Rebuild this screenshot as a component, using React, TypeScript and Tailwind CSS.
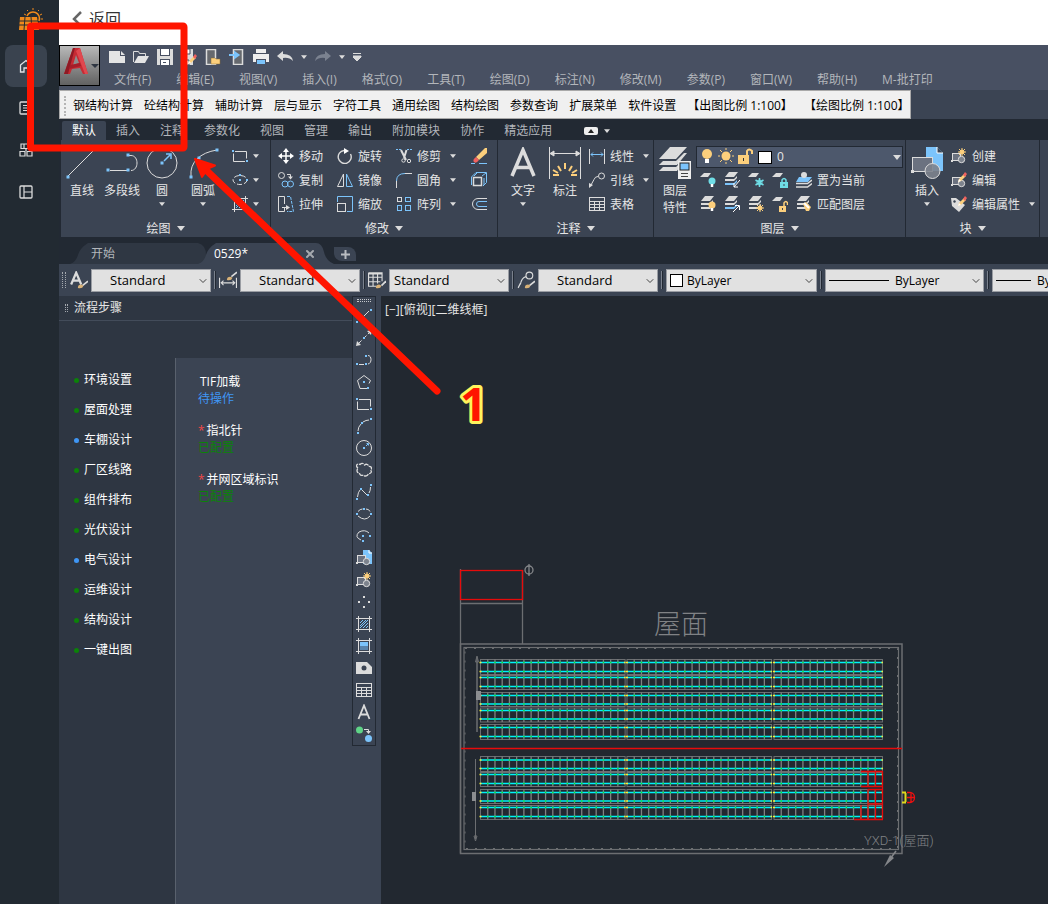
import type { ReactNode } from 'react';
import { ChevronDown, X } from 'lucide-react';

const W = '#dcdcdc';
const B = '#7cc4fb';
const Y = '#fccf7c';
const T = '#6fdde6';

interface IconProps {
  children: ReactNode;
  size?: number;
  box?: number;
}

function Icon({ children, size = 16, box = 16 }: IconProps) {
  return (
    <svg
      width={size}
      height={size}
      viewBox={`0 0 ${box} ${box}`}
      fill="none"
      stroke={W}
      className="shrink-0"
      aria-hidden="true"
    >
      {children}
    </svg>
  );
}

// Small blue grip square centred on a point
const Dot = ({ x, y, s = 2 }: { x: number; y: number; s?: number }) => (
  <rect x={x - s / 2} y={y - s / 2} width={s} height={s} fill={B} stroke="none" />
);

const Caret = ({ wide = false }: { wide?: boolean }) => (
  <svg
    width={wide ? 8 : 6}
    height={wide ? 5 : 4}
    viewBox="0 0 8 5"
    className="shrink-0"
    aria-hidden="true"
  >
    <path d="M0 0h8L4 5z" fill={W} />
  </svg>
);

const Pencil = () => (
  <g stroke="none">
    <path d="M7 10l1-3 5-5 2 2-5 5z" fill={Y} />
    <path d="M12 3l2-3 2 2-2 3z" fill="#f0625f" />
    <path d="M7 10l1-3 2 2z" fill="#fff" />
  </g>
);

const Star = ({ x, y }: { x: number; y: number }) => (
  <g stroke={Y}>
    <path d={`M${x - 4} ${y}h8M${x} ${y - 4}v8M${x - 3} ${y - 3}l6 6M${x + 3} ${y - 3}l-6 6`} />
    <circle cx={x} cy={y} r="2" fill={Y} />
  </g>
);

const BlockShape = () => (
  <>
    <rect x="1.500" y="5.500" width="8" height="7" fill="#6b7280" />
    <rect x="0" y="12" width="2" height="2" fill={W} stroke="none" />
    <circle cx="10.500" cy="11.500" r="3.200" fill="#7d838d" />
  </>
);

const layerSheets = 'M4 1h7l-3 4H0z';

const Sheets = ({ tint = W }: { tint?: string }) => (
  <g stroke="none" fill={W}>
    <path d="M5 0h9l-4 5H1z" />
    <path d="M1 7h9l3-3v2l-3 3H1z" />
    <path d="M1 11h9l3-3v2l-3 3H1z" fill={tint} />
  </g>
);

const icons = {
  line: (
    <>
      <path d="M3 13L13 3" />
      <Dot x={1} y={14} />
      <Dot x={15} y={2} />
    </>
  ),
  xline: (
    <>
      <path d="M2 14L14 2" strokeDasharray="5 2" />
      <path d="M0 16l1-5 4 4zM16 0l-1 5-4-4z" fill={W} stroke="none" />
      <Dot x={8} y={8} />
    </>
  ),
  pline: (
    <>
      <path d="M3 12.500h5M12 3.500c4 0 4 8 0 8.500" />
      <Dot x={1} y={12} />
      <Dot x={10} y={12} />
      <Dot x={10} y={4} />
    </>
  ),
  polygon: (
    <>
      <path d="M8 1.500l6.500 5-1.500 3M11 14.500H4l-2.500-8L8 1.500" />
      <Dot x={8} y={8} />
      <Dot x={12} y={14} />
    </>
  ),
  rect: (
    <>
      <path d="M3 3.500h11.500v7M13 13.500H1.500v-8" />
      <Dot x={1} y={3} />
      <Dot x={15} y={13} />
    </>
  ),
  arc: (
    <>
      <path d="M2 13Q2 9 5 6M7 4Q10 2 13 2" />
      <Dot x={2} y={15} />
      <Dot x={6} y={5} />
      <Dot x={15} y={1} />
    </>
  ),
  circle: (
    <>
      <circle cx="8" cy="8" r="7.500" />
      <path d="M10 6l2-2M10.500 3.500h2v2" stroke={B} />
      <Dot x={8} y={8} />
    </>
  ),
  cloud: (
    <path
      d="M2 6C-1 4 1 1 4 2.500c2-2 4-1 4.500.5 2-1.500 4-.5 4 1.500 3-.5 4 2 2 3.500 2 2 0 4-2 3.500-1 3-4 3-5 1.500-2 1-4 0-4-2-3 0-3-3-1.500-5z"
      strokeDasharray="5 1"
      strokeWidth="1.300"
    />
  ),
  spline: (
    <>
      <path d="M1.500 13Q2 8 4 6M6 6l5 5M13 9q1.500-2 1.500-6" />
      <Dot x={1} y={15} />
      <Dot x={5} y={5} />
      <Dot x={12} y={11} />
      <Dot x={15} y={1} />
    </>
  ),
  ellipse: (
    <>
      <path d="M2 5.500q2-2.500 4.500-2.500M10 3q3 0 4 2.500M14 10q-5 6-12 0" />
      <Dot x={8} y={3} />
      <Dot x={1} y={8} />
      <Dot x={15} y={8} />
    </>
  ),
  ellipseCentre: (
    <>
      <ellipse cx="8" cy="8" rx="7" ry="4.500" strokeDasharray="5 2" />
      <Dot x={8} y={8} />
      <Dot x={8} y={3} />
      <Dot x={15} y={8} />
    </>
  ),
  ellipseArc: (
    <>
      <path d="M13 5Q9 1 3 4q-5 5 2 8" />
      <Dot x={7} y={8} />
      <Dot x={14} y={8} />
      <Dot x={7} y={13} />
    </>
  ),
  insert: (
    <>
      <path d="M7 0h6l3 3v11H7z" fill={B} stroke="none" />
      <path d="M13 0v3h3" stroke="#fff" />
      <BlockShape />
    </>
  ),
  create: (
    <>
      <BlockShape />
      <Star x={11} y={4} />
    </>
  ),
  editBlock: (
    <>
      <BlockShape />
      <Pencil />
    </>
  ),
  editAttr: (
    <>
      <path d="M0 2h5l9 7-6 7L1 10z" fill={W} stroke="none" />
      <circle cx="3.500" cy="5.500" r="1.200" fill="#3b4453" stroke="none" />
      <Pencil />
    </>
  ),
  points: (
    <g fill={W} stroke="none">
      <rect x="7" y="2" width="2" height="2" />
      <rect x="2" y="7" width="2" height="2" />
      <rect x="12" y="7" width="2" height="2" />
      <rect x="7" y="12" width="2" height="2" />
    </g>
  ),
  hatch: (
    <>
      <path d="M0 2.500h16M0 13.500h16M2.500 0v16M13.500 0v16" />
      <path d="M4 7l3-3M4 10l6-6M4 12l8-8M7 12l5-5M10 12l2-2" stroke={B} />
    </>
  ),
  gradient: (
    <>
      <path d="M0 2.500h16M0 13.500h16M2.500 0v16M13.500 0v16" />
      <rect x="4" y="4" width="8" height="4" fill={B} stroke="none" />
      <rect x="4" y="8" width="8" height="4" fill="#5a84ab" stroke="none" />
    </>
  ),
  region: (
    <>
      <path d="M0 2h11l5 5v7H0z" fill={W} stroke="none" />
      <circle cx="8" cy="8" r="2.500" fill="#3b4453" stroke="none" />
    </>
  ),
  table: (
    <>
      <rect x="0.500" y="1.500" width="15" height="13" />
      <path d="M0 5.500h16M0 8.500h16M0 11.500h16M5.500 5v9M10.500 5v9" />
    </>
  ),
  mtext: <path d="M2.500 15L8 1.500 13.500 15M4.500 10.500h7" strokeWidth="1.800" />,
  addSelected: (
    <>
      <circle cx="3.500" cy="4" r="3.500" fill="#5fd487" stroke="none" />
      <circle cx="12.500" cy="12.500" r="3.500" fill={B} stroke="none" />
      <path d="M8 3.500h4.500V6" />
      <path d="M10 5h5l-2.500 3z" fill={W} stroke="none" />
    </>
  ),
  move: (
    <>
      <path d="M8 2v12M2 8h12" strokeWidth="1.500" stroke="#fff" />
      <path d="M8 0l3 4H5zM8 16l3-4H5zM0 8l4-3v6zM16 8l-4-3v6z" fill="#fff" stroke="none" />
    </>
  ),
  rotate: (
    <>
      <path d="M7 2.500a6.500 6.500 0 1 0 6.500 3.500" strokeWidth="1.400" />
      <path d="M7 0l5 3-5 3z" fill="#fff" stroke="none" />
    </>
  ),
  trim: (
    <>
      <path d="M0 1.500h5M11 1.500h5" stroke={B} strokeDasharray="2 1" />
      <path d="M5 2l5 10M10.500 2L8 10" strokeWidth="2" />
      <circle cx="7.500" cy="12.500" r="1.700" />
      <circle cx="13" cy="13" r="1.700" />
    </>
  ),
  copy: (
    <>
      <circle cx="3.500" cy="3.500" r="3" />
      <path d="M9 2.500h3.500V5" />
      <path d="M10 4.500h5l-2.500 3z" fill={W} stroke="none" />
      <circle cx="7" cy="12" r="3" stroke={B} />
      <circle cx="12.500" cy="12" r="3" stroke={B} />
    </>
  ),
  mirror: (
    <>
      <path d="M6.500 2v12.500h-6z" />
      <path d="M9.500 2v12.500h6z" stroke={B} />
    </>
  ),
  fillet: (
    <>
      <path d="M.5 16V9M9 1.500h7" />
      <path d="M.5 9q0-7.500 8.500-7.500" stroke={B} />
    </>
  ),
  stretch: (
    <>
      <path d="M6.500 11v4.500h-6V.5h6V8" />
      <path d="M9 .5h3.500l3 15H9" stroke={B} strokeDasharray="3 1" />
      <path d="M4 11.500h5" />
      <path d="M8 9l4 2.500L8 14z" fill={W} stroke="none" />
    </>
  ),
  scale: (
    <>
      <path d="M.5 6V.5h15v15H10" stroke={B} />
      <rect x="0.500" y="7.500" width="8" height="8" />
    </>
  ),
  array: (
    <>
      <rect x="1.500" y="1.500" width="4" height="4" />
      <rect x="9.500" y="1.500" width="5" height="4" stroke={B} />
      <rect x="1.500" y="9.500" width="4" height="5" stroke={B} />
      <rect x="9.500" y="9.500" width="5" height="5" stroke={B} />
    </>
  ),
  erase: (
    <>
      <path d="M14 0h2v5l-8 7-3-3z" fill={Y} stroke="none" />
      <path d="M5 9l3 3q-3 4-5 2t2-5" fill="#f0625f" stroke="none" />
      <path d="M0 15.500h4M8 15.500h8" stroke={B} />
    </>
  ),
  explode: (
    <>
      <rect x="2.500" y="5.500" width="8" height="8" strokeWidth="1.500" />
      <path d="M.5 13V5L5 .5h10.500v10L12 14M3 4l3-3M11 4l4-3M13 6v7" stroke={B} />
    </>
  ),
  offset: (
    <>
      <path d="M16 2.500H7a5.500 5.500 0 0 0 0 11h9" />
      <path d="M16 5.500H8a2.500 2.500 0 0 0 0 5h8" stroke={B} />
    </>
  ),
  linear: (
    <>
      <path d="M.5 1v15M15.500 1v15" />
      <path d="M2 6.500h12M4 4.500l-2 2 2 2M12 4.500l2 2-2 2" stroke={B} />
    </>
  ),
  leader: (
    <>
      <circle cx="12.500" cy="4" r="3" />
      <path d="M9 4.500q-3 0-4 3L2 13" />
      <path d="M0 16v-5l4 2z" fill={W} stroke="none" />
    </>
  ),
  layOff: (
    <>
      <path d={layerSheets} fill={W} stroke="none" />
      <circle cx="12" cy="9" r="3.500" fill={T} stroke="none" />
      <path d="M12 12v3" stroke="#fff" strokeWidth="2.500" />
    </>
  ),
  layIso: (
    <>
      <Sheets tint={B} />
      <path d="M16 8l-6 7M10 11v4h4" stroke="#fff" />
    </>
  ),
  layFreeze: (
    <>
      <path d={layerSheets} fill={W} stroke="none" />
      <path d="M11.500 6v9M7.500 8l8 5M15.500 8l-8 5" stroke={T} strokeWidth="1.500" />
      <circle cx="11.500" cy="10.500" r="2.500" stroke={T} />
    </>
  ),
  layLock: (
    <>
      <path d={layerSheets} fill={W} stroke="none" />
      <rect x="8" y="10" width="8" height="6" fill={T} stroke="none" />
      <path d="M10 10V8q2-3 4 0v2" stroke={T} strokeWidth="1.500" />
      <path d="M12 12v2" stroke="#3b4453" />
    </>
  ),
  layOn: (
    <>
      <Sheets />
      <circle cx="12" cy="9" r="3.500" fill={Y} stroke="none" />
      <path d="M12 12v3" stroke="#fff" strokeWidth="2.500" />
    </>
  ),
  layUniso: (
    <>
      <Sheets tint={B} />
      <path d="M9 16l6-6M11 9.500h4.500V14" stroke="#fff" />
    </>
  ),
  layThaw: (
    <>
      <Sheets />
      <Star x={12} y={12} />
    </>
  ),
  layUnlock: (
    <>
      <path d={layerSheets} fill={W} stroke="none" />
      <rect x="7" y="10" width="7" height="6" fill={Y} stroke="none" />
      <path d="M12 10V7q2-3 3.500 0v2" stroke={Y} strokeWidth="1.500" />
      <path d="M10.500 12v2" stroke="#3b4453" />
    </>
  ),
  layCurrent: (
    <>
      <path d="M3 5h13l-4 5H0z" fill={B} stroke="none" />
      <circle cx="8" cy="3" r="3" fill={W} stroke="none" />
      <path d="M0 11.500h11.500L16 8M0 15h11.500L16 11.500" strokeWidth="1.500" />
    </>
  ),
  layMatch: (
    <>
      <Sheets />
      <path d="M7 8l3-2 5 5-2 4h-3z" fill={Y} stroke="none" />
      <path d="M8 7l5 5" stroke="#fff" strokeWidth="2" />
    </>
  ),
  fileNew: <path d="M0 2h11v5h5v7H0zM12 2l4 4h-4z" fill="#e4e4e4" stroke="none" />,
  fileOpen: (
    <>
      <path d="M.5 13V2.500h5l1 2h6V7" />
      <path d="M1 14L5 7h11l-4 7z" fill="#e4e4e4" stroke="none" />
    </>
  ),
  save: (
    <>
      <path d="M0 0h16v16H0z" fill={W} stroke="none" />
      <path d="M3 0h10v7H3zM3 10h10v6H3z" fill="#485062" stroke="none" />
      <path d="M4 0h8v6H4zM4 11h8v5H4z" fill="#fff" stroke="none" />
      <path d="M6 13.500h3" stroke="#485062" />
    </>
  ),
  saveAs: (
    <>
      <path d="M0 0h12v16H0z" fill={W} stroke="none" />
      <path d="M3 0h6v5H3zM3 11h5v5H3z" fill="#fff" stroke="#485062" />
      <g transform="translate(0 5)">
        <Pencil />
      </g>
    </>
  ),
  phoneOpen: (
    <>
      <rect x="1.500" y="0.500" width="9" height="15" fill="#66696e" strokeWidth="1.500" />
      <path d="M6 15V9h4l1 1h4v5z" fill={Y} stroke="#8b6a31" strokeWidth=".5" />
    </>
  ),
  phoneSave: (
    <>
      <rect x="4.500" y="0.500" width="9" height="15" fill="#66696e" strokeWidth="1.500" />
      <path d="M0 6h6M6 3.500l3.500 2.500L6 8.500z" stroke={B} strokeWidth="2" fill={B} />
    </>
  ),
  print: (
    <g stroke="none" fill="#eee">
      <path d="M3 0h10v4H3zM0 5h16v8H0z" />
      <path d="M3 10h10v6H3z" fill="#485062" />
      <path d="M4 11h8v4H4z" fill={B} />
    </g>
  ),
  undo: <path d="M0 7l6-5v3q9 0 10 7-4-4-10-3v3z" fill={W} stroke="none" />,
  redo: <path d="M16 7l-6-5v3Q1 5 0 12q4-4 10-3v3z" fill="#7b8290" stroke="none" />,
  custom: <path d="M0 4.500h8M0 7h8v1l-4 4-4-4z" fill={W} />,
  textStyle: (
    <>
      <path d="M1 12L5.500 1.500 10 12M3 8.500h5" strokeWidth="2" />
      <path d="M16 9l-5 4" strokeWidth="1.500" />
      <path d="M7 15q0-3 3-3l2 1q-1 3-5 2" fill="#d9b277" stroke="none" />
    </>
  ),
  dimStyle: (
    <>
      <path d="M.5 6v9M15.500 6v9M2 10.500h12M4 8.500l-2 2 2 2M12 8.500l2 2-2 2" />
      <path d="M16 1l-5 4" strokeWidth="1.500" />
      <path d="M7 8q0-3 3-3l2 1q-1 3-5 2" fill="#d9b277" stroke="none" />
    </>
  ),
  tableStyle: (
    <>
      <path d="M.5 1.500h12V9M.5 1.500v12h7M0 2.500h13M0 5.500h12M0 9.500h11M4.500 2v11M8.500 2v9" />
      <path d="M16 9l-4 4" strokeWidth="1.500" />
      <path d="M7 15q0-3 3-3l2 1q-1 3-5 2" fill="#d9b277" stroke="none" />
    </>
  ),
  leaderStyle: (
    <>
      <circle cx="11" cy="4" r="3" />
      <path d="M8 5q-4 1-5 7M1 15l2-4" />
      <path d="M16 9l-5 4" strokeWidth="1.500" />
      <path d="M7 15q0-3 3-3l2 1q-1 3-5 2" fill="#d9b277" stroke="none" />
    </>
  ),
};

type IconName = keyof typeof icons;

const bigIcons = {
  line: (
    <>
      <path d="M2 29L29 2" />
      <Dot x={2} y={30} s={3} />
      <Dot x={30} y={2} s={3} />
    </>
  ),
  pline: (
    <>
      <path d="M4 23.500h18M22 8.500h3c8 0 8 15 0 15" />
      <Dot x={2} y={23} s={3} />
      <Dot x={22} y={23} s={3} />
      <Dot x={22} y={8} s={3} />
    </>
  ),
  circle: (
    <>
      <circle cx="16" cy="16" r="15" />
      <path d="M18 14l6-6M20 7h5v5" stroke={B} strokeWidth="1.500" />
      <Dot x={16} y={16} s={3} />
    </>
  ),
  arc: (
    <>
      <path d="M4 29Q3 19 10 12T30 3" />
      <Dot x={4} y={30} s={3} />
      <Dot x={12} y={11} s={3} />
      <Dot x={30} y={3} s={3} />
    </>
  ),
  text: <path d="M5 29L16 3l11 26M9 20.500h14" strokeWidth="3.500" />,
  dim: (
    <>
      <path d="M.5 0v32M31.500 0v32M2 6.500h28" />
      <path d="M1 6.500l4-2.500v5zM31 6.500l-4-2.500v5z" fill={W} />
      <path d="M16 16v6M9 19l3 5M23 19l-3 5M4 23l5 3M28 23l-5 3M4 28h6M22 28h6" stroke={Y} strokeWidth="2" />
    </>
  ),
  layers: (
    <g stroke="none">
      <path d="M11 0h17L17 12H0zM0 18h17l3-4h-3l-2 2H4l-4 2M0 24h17l3-4h-3l-2 2H4z" fill={W} />
      <path d="M4 14h13l8-8h3L18 18H0zM4 20h13l3-3v4l-2 3H0z" fill={W} />
      <rect x="19" y="14" width="13" height="18" fill="#eee" />
      <rect x="21" y="16" width="9" height="7" fill={B} stroke="#222" />
      <path d="M22 26.500h7M22 29.500h7" stroke="#444" />
    </g>
  ),
  insert: (
    <>
      <path d="M15 0h11l6 6v18H15z" fill={B} stroke="none" />
      <path d="M26 0v6h6" fill="#3b4453" stroke="#fff" />
      <rect x="1.500" y="10.500" width="20" height="14" fill="#6b7280" />
      <rect x="0" y="23" width="3" height="3" fill={W} stroke="none" />
      <circle cx="21.500" cy="24" r="7.500" fill="#7d838d" fillOpacity=".9" />
    </>
  ),
};

interface BigButtonProps {
  icon: keyof typeof bigIcons;
  label: string;
  caret?: boolean;
  width?: string;
}

function BigButton({ icon, label, caret = false, width = 'w-[42px]' }: BigButtonProps) {
  return (
    <button className={`flex shrink-0 flex-col items-center gap-[3px] pt-[3px] leading-[17px] ${width}`}>
      <Icon size={32} box={32}>
        {bigIcons[icon]}
      </Icon>
      <span className="w-min whitespace-pre">{label}</span>
      {caret && <Caret />}
    </button>
  );
}

function SmallButton({ icon, label, caret }: { icon: IconName; label?: string; caret?: boolean }) {
  return (
    <button className="flex h-6 items-center gap-[5px]" aria-label={label ?? icon}>
      <Icon>{icons[icon]}</Icon>
      {label && <span className="pt-0.5 pr-1">{label}</span>}
      {caret && <Caret />}
    </button>
  );
}

function Panel({ title, width, children }: { title: string; width: string; children: ReactNode }) {
  return (
    <section className={`flex shrink-0 flex-col bg-[#3b4453] pt-1 ${width}`}>
      <div className="flex h-[72px]">{children}</div>
      <button className="flex h-[21px] items-center justify-center gap-1.5 pt-1">
        {title}
        <Caret wide />
      </button>
    </section>
  );
}

const menus = [
  '文件(F)',
  '编辑(E)',
  '视图(V)',
  '插入(I)',
  '格式(O)',
  '工具(T)',
  '绘图(D)',
  '标注(N)',
  '修改(M)',
  '参数(P)',
  '窗口(W)',
  '帮助(H)',
  'M-批打印',
];

const plugins = [
  '钢结构计算',
  '砼结构计算',
  '辅助计算',
  '层与显示',
  '字符工具',
  '通用绘图',
  '结构绘图',
  '参数查询',
  '扩展菜单',
  '软件设置',
  '【出图比例 1:100】',
  '【绘图比例 1:100】',
];

const ribbonTabs = [
  '默认',
  '插入',
  '注释',
  '参数化',
  '视图',
  '管理',
  '输出',
  '附加模块',
  '协作',
  '精选应用',
];

const steps = [
  { name: '环境设置', active: false },
  { name: '屋面处理', active: false },
  { name: '车棚设计', active: true },
  { name: '厂区线路', active: false },
  { name: '组件排布', active: false },
  { name: '光伏设计', active: false },
  { name: '电气设计', active: true },
  { name: '运维设计', active: false },
  { name: '结构设计', active: false },
  { name: '一键出图', active: false },
];

const tasks = [
  { name: 'TIF加载', status: '待操作', required: false, done: false },
  { name: '指北针', status: '已配置', required: true, done: true },
  { name: '并网区域标识', status: '已配置', required: true, done: true },
];

const drawTools: IconName[] = [
  'line',
  'xline',
  'pline',
  'polygon',
  'rect',
  'arc',
  'circle',
  'cloud',
  'spline',
  'ellipse',
  'ellipseArc',
  'insert',
  'create',
  'points',
  'hatch',
  'gradient',
  'region',
  'table',
  'mtext',
  'addSelected',
];

function Sidebar() {
  const item = 'flex size-[42px] items-center justify-center rounded-lg';
  return (
    <nav className="flex w-[59px] shrink-0 flex-col bg-[#222a32] pl-[5px] text-[#b9bec5]">
      <a href="#" aria-label="首页" className="flex h-[45px] items-start pt-2 pl-[14px]">
        <svg width="25" height="23" viewBox="0 0 25 23" fill="none" stroke="#f08a1c">
          <path d="M8 8a6.500 6.500 0 1 1 12 5" strokeWidth="1.500" />
          <path d="M14 0v2M8 2l1 1M20 2l-1 1M23 6l-2 1M24 11h-2M22 16l-2-1M5 6l2 1" />
          <path d="M1 9h17l2 13H0z" fill="#f08a1c" stroke="none" />
          <path d="M0 13h19M0 17h20M6 9l-1 13M12 9l1 13" stroke="#222a32" />
        </svg>
      </a>
      <a href="#" aria-label="主页" className={`${item} bg-[#3a434f]`}>
        <Icon size={14} box={14}>
          <path d="M1.500 6L7 1.500 12.500 6v7H9V9H5v4H1.500z" stroke="#dfe2e6" strokeWidth="1.300" />
        </Icon>
      </a>
      <a href="#" aria-label="列表" className={item}>
        <Icon size={14} box={14}>
          <rect x="1" y="1" width="12" height="12" rx="1" strokeWidth="1.300" />
          <path d="M4 4.500h6M4 7h6M4 9.500h6" />
        </Icon>
      </a>
      <a href="#" aria-label="模块" className={item}>
        <Icon size={14} box={14}>
          <path d="M2 1h10v4.500H2zM1 8.500h5V13H1zM8 8.500h5V13H8zM7 5.500V8M5 1v4" strokeWidth="1.200" />
        </Icon>
      </a>
      <a href="#" aria-label="布局" className={item}>
        <Icon size={14} box={14}>
          <rect x="1" y="1" width="12" height="12" rx="1" strokeWidth="1.300" />
          <path d="M5 1v12M5 7h8" strokeWidth="1.200" />
        </Icon>
      </a>
    </nav>
  );
}

function TitleBar() {
  return (
    <div className="flex h-[45px] shrink-0 bg-[#485062]">
      <button
        aria-label="应用程序菜单"
        className="flex h-[41px] w-[41px] shrink-0 items-start border border-black bg-linear-to-b from-[#b9b9b9] to-[#626262] pt-0.5 pl-1"
      >
        <svg width="35" height="28" viewBox="0 0 35 28" aria-hidden="true">
          <path d="M9 0h7l8 26h-5l-3-6-8 1-2 5H0z" fill="#c62b34" />
          <path d="M12 7l3 8-6 2z" fill="#8d8d8d" />
          <path d="M9 0h2L4 26H0z" fill="#8f1a24" />
          <path d="M16 0l8 26h-3L12 3z" fill="#e0484f" />
          <path d="M6 17l10-2 1 3-12 3z" fill="#a51e29" />
          <path d="M27 16h8l-4 4z" fill="#2f3642" />
        </svg>
      </button>
      <div className="flex min-w-0 flex-col">
        <div className="flex h-[23px] items-center gap-2 pl-[9px]">
          {(
            ['fileNew', 'fileOpen', 'save', 'saveAs', 'phoneOpen', 'phoneSave', 'print', 'undo'] as const
          ).map((name) => (
            <button key={name} aria-label={name}>
              <Icon>{icons[name]}</Icon>
            </button>
          ))}
          <Caret />
          <button aria-label="redo">
            <Icon>{icons.redo}</Icon>
          </button>
          <Caret />
          <button aria-label="custom">
            <Icon>{icons.custom}</Icon>
          </button>
        </div>
        <div className="flex h-[22px] items-center gap-[25px] pt-0.5 pl-[14px] whitespace-nowrap text-[#b3b6bb]">
          {menus.map((menu) => (
            <button key={menu}>{menu}</button>
          ))}
        </div>
      </div>
    </div>
  );
}

function Ribbon() {
  return (
    <div className="flex h-[97px] shrink-0 gap-px overflow-hidden pl-0.5 whitespace-nowrap text-[#e6e6e6]">
      <Panel title="绘图" width="w-[209px]">
        <div className="flex pl-px">
          <BigButton icon="line" label="直线" width="w-10" />
          <BigButton icon="pline" label="多段线" width="w-10" />
          <BigButton icon="circle" label="圆" width="w-10" caret />
          <BigButton icon="arc" label="圆弧" caret />
        </div>
        <div className="pl-2">
          <SmallButton icon="rect" caret />
          <SmallButton icon="ellipseCentre" caret />
          <SmallButton icon="hatch" caret />
        </div>
      </Panel>
      <Panel title="修改" width="w-[226px]">
        <div className="w-[66px] pl-[7px]">
          <SmallButton icon="move" label="移动" />
          <SmallButton icon="copy" label="复制" />
          <SmallButton icon="stretch" label="拉伸" />
        </div>
        <div className="w-[59px]">
          <SmallButton icon="rotate" label="旋转" />
          <SmallButton icon="mirror" label="镜像" />
          <SmallButton icon="scale" label="缩放" />
        </div>
        <div className="w-[75px]">
          <SmallButton icon="trim" label="修剪" caret />
          <SmallButton icon="fillet" label="圆角" caret />
          <SmallButton icon="array" label="阵列" caret />
        </div>
        <div>
          <SmallButton icon="erase" />
          <SmallButton icon="explode" />
          <SmallButton icon="offset" />
        </div>
      </Panel>
      <Panel title="注释" width="w-[155px]">
        <div className="flex pl-1">
          <BigButton icon="text" label="文字" caret />
          <BigButton icon="dim" label="标注" />
        </div>
        <div className="pl-[3px]">
          <SmallButton icon="linear" label="线性" caret />
          <SmallButton icon="leader" label="引线" caret />
          <SmallButton icon="table" label="表格" />
        </div>
      </Panel>
      <Panel title="图层" width="w-[251px]">
        <BigButton icon="layers" label={'图层\n特性'} />
        <div className="flex-1">
          <div className="relative mt-0.5 mr-0.5 h-[22px]">
            <select
              aria-label="图层"
              className="h-full w-full appearance-none border border-[#222933] bg-[#4d586c] pl-20 text-[#e6e6e6]"
            >
              <option>0</option>
            </select>
            <svg
              width="76"
              height="18"
              viewBox="0 0 76 18"
              className="pointer-events-none absolute top-0.5 left-1"
              aria-hidden="true"
            >
              <circle cx="7" cy="6" r="5" fill={Y} />
              <path d="M5 11h4v4H5z" fill="#fff" />
              <circle cx="26" cy="8" r="4.500" fill={Y} />
              <path d="M26 0v2M26 14v2M18 8h2M32 8h2M20 2l2 2M32 2l-2 2M20 14l2-2M32 14l-2-2" stroke={Y} />
              <path d="M38 7h11v9H38z" fill={Y} />
              <path d="M47 7V3q2-3 5 0v3" stroke={Y} strokeWidth="2" fill="none" />
              <path d="M43.500 10v3" stroke="#333" />
              <rect x="58.500" y="3.500" width="13" height="12" fill="#fff" stroke="#000" />
            </svg>
            <span className="pointer-events-none absolute top-[9px] right-0.5 flex">
              <Caret wide />
            </span>
          </div>
          <div className="flex gap-2 pl-1">
            <SmallButton icon="layOff" />
            <SmallButton icon="layIso" />
            <SmallButton icon="layFreeze" />
            <SmallButton icon="layLock" />
            <SmallButton icon="layCurrent" label="置为当前" />
          </div>
          <div className="flex gap-2 pl-1">
            <SmallButton icon="layOn" />
            <SmallButton icon="layUniso" />
            <SmallButton icon="layThaw" />
            <SmallButton icon="layUnlock" />
            <SmallButton icon="layMatch" label="匹配图层" />
          </div>
        </div>
      </Panel>
      <Panel title="块" width="w-[133px]">
        <BigButton icon="insert" label="插入" caret />
        <div className="pl-[3px]">
          <SmallButton icon="create" label="创建" />
          <SmallButton icon="editBlock" label="编辑" />
          <SmallButton icon="editAttr" label="编辑属性" caret />
        </div>
      </Panel>
      <div className="flex-1 bg-[#3b4453]" />
    </div>
  );
}

function FileTabs() {
  return (
    <div className="flex h-[27px] shrink-0 items-end pl-[11px]">
      <div className="relative h-[21px] w-[136px]">
        <svg
          className="absolute inset-0 h-full w-full"
          viewBox="0 0 136 21"
          preserveAspectRatio="none"
          aria-hidden="true"
        >
          <path d="M0 21Q6 19 8 12T18 0h110q8 2 8 12v9z" fill="#2f3743" />
        </svg>
        <button className="relative pl-[21px] leading-[21px] text-[#b3b6bb]">开始</button>
      </div>
      <div className="relative -ml-2 h-[21px] w-[136px]">
        <svg
          className="absolute inset-0 h-full w-full"
          viewBox="0 0 136 21"
          preserveAspectRatio="none"
          aria-hidden="true"
        >
          <path d="M0 21Q6 19 8 12T18 0h100q6 0 8 9t10 12z" fill="#3b4453" />
        </svg>
        <div className="relative flex h-full items-center justify-between pr-[18px] pl-4 text-white">
          <button>0529*</button>
          <button aria-label="关闭">
            <X size={12} strokeWidth={4} color="#a5a9af" />
          </button>
        </div>
      </div>
      <button
        aria-label="新建选项卡"
        className="mb-[3px] flex h-[14px] w-[22px] items-center justify-center rounded-tr-lg rounded-bl-lg bg-[#3b4453]"
      >
        <svg width="9" height="9" viewBox="0 0 9 9" aria-hidden="true">
          <path d="M4.500 0v9M0 4.500h9" stroke="#b9bcc1" strokeWidth="2" />
        </svg>
      </button>
    </div>
  );
}

interface ComboProps {
  label: string;
  value: string;
  width: string;
  pad: string;
  children?: ReactNode;
}

function Combo({ label, value, width, pad, children }: ComboProps) {
  return (
    <div className={`relative h-[23px] shrink-0 ${width}`}>
      <select
        aria-label={label}
        className={`h-full w-full appearance-none border border-[#9a9da3] bg-[#e1e1e1] pt-0.5 text-black ${pad}`}
      >
        <option>{value}</option>
      </select>
      {children}
      <ChevronDown
        size={12}
        strokeWidth={2}
        color="#444"
        className="pointer-events-none absolute top-[6px] right-0.5"
      />
    </div>
  );
}

const Sep = () => <span className="h-[18px] w-0.5 shrink-0 border-r border-l border-r-[#222933] border-l-[#7a818d]" />;

function StyleBar() {
  return (
    <div className="flex h-8 shrink-0 items-center gap-[3px] overflow-hidden bg-[#3b4453] pl-[3px]">
      <span className="mr-px h-4 w-1 shrink-0 border-x border-dotted border-[#a5a9af]" />
      <Icon size={18}>{icons.textStyle}</Icon>
      <Combo label="文字样式" value="Standard" width="w-[120px]" pad="pl-[18px] text-[13px]" />
      <Sep />
      <Icon size={18}>{icons.dimStyle}</Icon>
      <Combo label="标注样式" value="Standard" width="w-[120px]" pad="pl-[18px] text-[13px]" />
      <Sep />
      <Icon size={18}>{icons.tableStyle}</Icon>
      <Combo label="表格样式" value="Standard" width="w-[120px]" pad="pl-1 text-[13px]" />
      <Sep />
      <Icon size={18}>{icons.leaderStyle}</Icon>
      <Combo label="多重引线样式" value="Standard" width="w-[120px]" pad="pl-[18px] text-[13px]" />
      <Sep />
      <Combo label="颜色" value="ByLayer" width="w-[151px]" pad="pl-5 text-xs">
        <span className="pointer-events-none absolute top-[5px] left-1 size-[13px] border border-black bg-white" />
      </Combo>
      <Sep />
      <Combo label="线型" value="ByLayer" width="w-[159px]" pad="pl-[69px] text-xs">
        <span className="pointer-events-none absolute top-[11px] left-1 h-px w-[60px] bg-black" />
      </Combo>
      <Sep />
      <Combo label="线宽" value="ByLayer" width="w-[160px]" pad="pl-11 text-xs">
        <span className="pointer-events-none absolute top-[11px] left-1 h-px w-[35px] bg-black" />
      </Combo>
    </div>
  );
}

function ProcessPanel() {
  return (
    <aside className="flex w-[293px] shrink-0 flex-col bg-[#2e3642] text-white">
      <h2 className="flex h-[25px] items-center gap-1.5 border-b border-[#434c5a] pl-1.5 text-[#e6e6e6]">
        <span className="h-2 w-[3px] border-x border-dotted border-[#a5a9af]" />
        流程步骤
      </h2>
      <div className="mt-[37px] flex flex-1">
        <ul className="w-[117px] shrink-0 border-r border-[#59616d] pt-[7px]">
          {steps.map((step) => (
            <li key={step.name} className="flex h-[30px] items-center gap-[5px] pl-[15px]">
              <span
                className={`size-[5px] rounded-full ${step.active ? 'bg-[#3f96f5]' : 'bg-[#0b8208]'}`}
              />
              <button>{step.name}</button>
            </li>
          ))}
        </ul>
        <ul className="flex-1 bg-[#3b4453] pt-[15px] pl-[22px] leading-[17px]">
          {tasks.map((task) => (
            <li key={task.name} className="mb-[15px]">
              <p className="flex gap-0.5">
                <span className="text-[#f04848]">{task.required && '*'}</span>
                {task.name}
              </p>
              <p className={task.done ? 'text-[#0b8208]' : 'text-[#3f96f5]'}>{task.status}</p>
            </li>
          ))}
        </ul>
      </div>
    </aside>
  );
}

function ToolStrip() {
  return (
    <div className="flex w-[29px] shrink-0 items-start bg-[#3b4453]">
      <div className="flex w-6 flex-col items-center border border-[#222933] pt-0.5">
        <span className="h-[3px] w-[14px] border-y border-dotted border-[#c5c8cc]" />
        <div className="pt-[3px]">
          {drawTools.map((name) => (
            <button key={name} aria-label={name} className="flex h-[22px] items-center">
              <Icon>{icons[name]}</Icon>
            </button>
          ))}
        </div>
      </div>
    </div>
  );
}

// Module strips: outline top/bottom and the two rails that cross each strip
const strips = [
  { top: 659.5, bottom: 674.5, rails: [662.5, 671.5] },
  { top: 675.5, bottom: 689.5, rails: [677.5, 686.5] },
  { top: 692.5, bottom: 706.5, rails: [695.5, 704] },
  { top: 708, bottom: 722, rails: [710.5, 719] },
  { top: 724.5, bottom: 739.5, rails: [727.5, 736.5] },
  { top: 756.5, bottom: 771.5, rails: [760, 768.5] },
  { top: 772.5, bottom: 786.5, rails: [774.5, 783.5] },
  { top: 789.5, bottom: 803.5, rails: [792.5, 801] },
  { top: 805.5, bottom: 819.5, rails: [807.5, 816.5] },
];

const groups = [
  { x: 480.5, cols: 20 },
  { x: 627, cols: 20 },
  { x: 774, cols: 15 },
];

const PITCH = 7.23;

function Canvas() {
  return (
    <main className="relative min-w-0 flex-1 overflow-hidden bg-[#222830]">
      <p className="pt-1.5 pl-1 text-[#e6e6e6]">[−][俯视][二维线框]</p>
      <svg className="absolute inset-0 h-full w-full" fill="none" stroke="#6c6e71">
        <g transform="translate(-381 -296)">
          <path d="M460.500 569v284M522.500 570v74M460 603.500h63" strokeWidth="1.300" />
          <rect x="460.500" y="570.500" width="62" height="29" stroke="#e60b0b" strokeWidth="1.300" />
          <circle cx="529" cy="570" r="4" stroke="#85878a" strokeWidth="1.300" />
          <path d="M529 564v12" stroke="#85878a" strokeWidth="1.300" />

          <rect x="460.500" y="644" width="441.500" height="209.500" strokeWidth="1.500" />
          <rect x="464" y="647.500" width="434.500" height="202" strokeWidth="1.200" />
          <rect x="465" y="648.500" width="432.500" height="200" strokeDasharray="2 7" />

          {groups.map((g) =>
            strips.map((s) => {
              const end = g.x + g.cols * PITCH;
              return (
                <g key={`${g.x}-${s.top}`}>
                  <rect x={g.x} y={s.top} width={end - g.x} height={s.bottom - s.top} />
                  {Array.from({ length: g.cols - 1 }, (_, i) => (
                    <path
                      key={i}
                      d={`M${g.x + (i + 1) * PITCH} ${s.top}V${s.bottom}`}
                      stroke="#7f8184"
                      strokeWidth="1.300"
                    />
                  ))}
                  {s.rails.map((y) => (
                    <g key={y} strokeWidth="1.400">
                      <path d={`M${g.x} ${y}H${end}`} stroke="#00f0fa" />
                      <path
                        d={`M${g.x + PITCH - 0.7} ${y}H${end - 2}`}
                        stroke="#0be02c"
                        strokeDasharray="1.500 5.730"
                      />
                      <path d={`M${g.x - 1} ${y}h2M${end - 1} ${y}h1.500`} stroke="#f5f03a" strokeWidth="1.600" />
                    </g>
                  ))}
                </g>
              );
            })
          )}

          <path d="M461 748.500H902" stroke="#e60b0b" strokeWidth="1.300" />
          <path
            d="M861 771.500h22M861 786.500h22M868 771v15M875.500 771v15M882.500 771v48M868 789.500h15M875.500 789v30M868 804h15M854 819.500h29M861 805v14M868 789v30"
            stroke="#e60b0b"
            strokeWidth="1.300"
          />

          <path d="M477 657v75" strokeWidth="1.500" />
          <path d="M475.500 662l1.500-6 1.500 6z" />
          <rect x="476" y="691" width="5" height="9" fill="#8b8d90" stroke="none" />
          <path d="M475.500 759v80M474 836l1.500 5 1.500-5z" />
          <rect x="472" y="792" width="4" height="9" fill="#8b8d90" stroke="none" />

          <path d="M902 792.500h4M902 802.500h4M905.500 793v9" stroke="#dfd81d" strokeWidth="2" />
          <path
            d="M907 792.500h3a4.500 5 0 0 1 0 10h-3M907 797.500h8M911 793v9"
            stroke="#f01010"
            strokeWidth="1.300"
          />

          <path d="M896 851l-6 8" stroke="#85878a" strokeWidth="1.500" />
          <path d="M890 855l4 3-10 9z" fill="#85878a" stroke="none" />

          <g fill="#808285" stroke="none">
            <text x="654" y="634" fontSize="27" fontWeight="300">
              屋面
            </text>
            <text x="864" y="845" fontSize="13" fontFamily="Roboto, 'Noto Sans CJK SC', sans-serif" fontWeight="300">
              YXD-1(屋面)
            </text>
          </g>
        </g>
      </svg>
    </main>
  );
}

function Markup() {
  return (
    <svg className="pointer-events-none absolute inset-0 h-full w-full" fill="none" stroke="#ff1500">
      <rect x="30.500" y="26" width="153.500" height="122" rx="1" strokeWidth="7" />
      <path d="M437 391L205 169" strokeWidth="7" strokeLinecap="round" />
      <path d="M195 159l20 6.500-7 3-6 8.500z" fill="#ff1500" strokeWidth="2" strokeLinejoin="round" />
      <text
        x="460"
        y="421"
        fontSize="47"
        fontWeight="700"
        fill="#ff1500"
        stroke="#fff35c"
        strokeWidth="6"
        strokeLinejoin="round"
        paintOrder="stroke"
      >
        1
      </text>
    </svg>
  );
}

export default function App() {
  return (
    <div className="relative flex min-h-screen overflow-hidden bg-[#222933] font-['Open_Sans','Noto_Sans_CJK_SC',sans-serif] text-xs">
      <Sidebar />
      <div className="flex min-w-0 flex-1 flex-col">
        <header className="flex h-[45px] shrink-0 items-start bg-white pt-[7px] pl-[13px]">
          <button className="flex items-center gap-1.5 text-base text-[#333]">
            <svg width="11" height="16" viewBox="0 0 11 16" fill="none" aria-hidden="true">
              <path d="M9 1L2 8l7 7" stroke="#666" strokeWidth="2.500" />
            </svg>
            返回
          </button>
        </header>

        <TitleBar />

        <div className="flex h-[29px] shrink-0 bg-[#3b4453] whitespace-nowrap text-black">
          <div className="flex items-center gap-[11px] border border-[#a9a9a9] bg-[#f0f0f0] pt-0.5 pl-1">
            <span className="-mr-1.5 h-5 w-1 border-l-2 border-dotted border-[#b5b5b5]" />
            {plugins.map((name) => (
              <button key={name}>{name}</button>
            ))}
          </div>
        </div>

        <div className="flex h-[21px] shrink-0 items-end pl-[3px] whitespace-nowrap text-[#b3b6bb]">
          {ribbonTabs.map((tab, i) => (
            <button
              key={tab}
              className={`h-[19px] px-[10px] ${i === 0 ? 'rounded-t-xs bg-[#3b4453] text-white' : ''}`}
            >
              {tab}
            </button>
          ))}
          <button aria-label="最小化功能区" className="flex h-[19px] items-center gap-1.5 pl-[22px]">
            <svg width="14" height="8" viewBox="0 0 14 8" aria-hidden="true">
              <rect width="14" height="8" rx="2" fill="#eee" />
              <path d="M4 6l3-4 3 4z" fill="#222" />
            </svg>
            <Caret />
          </button>
        </div>

        <Ribbon />
        <FileTabs />
        <StyleBar />

        <div className="flex flex-1">
          <ProcessPanel />
          <ToolStrip />
          <Canvas />
        </div>
      </div>
      <Markup />
    </div>
  );
}
